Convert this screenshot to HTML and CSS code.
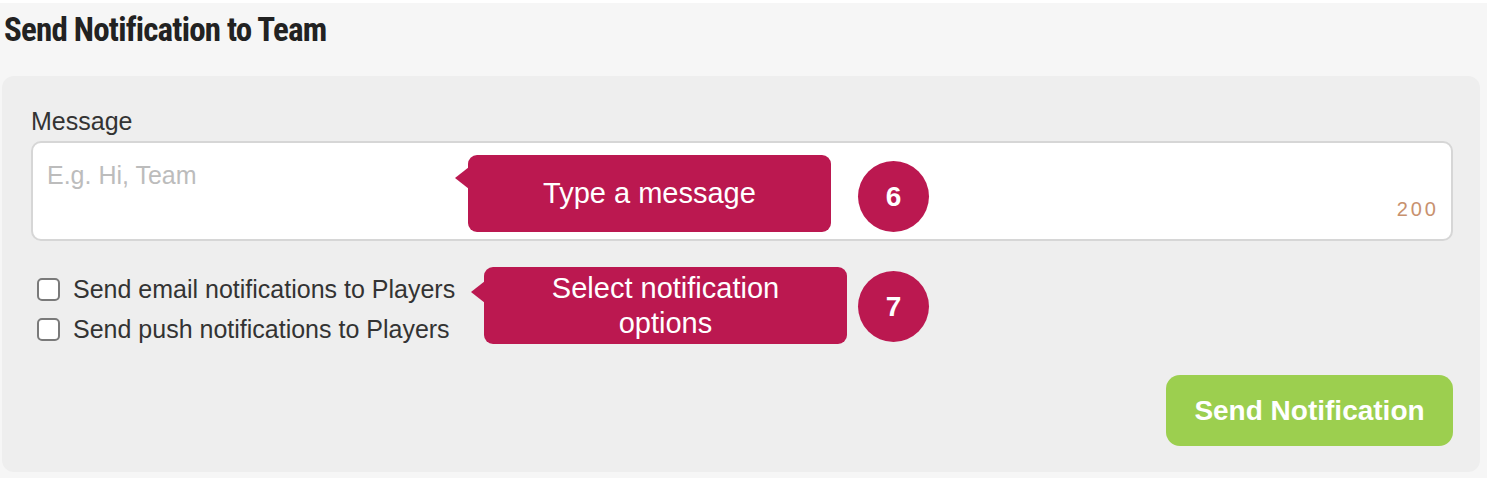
FILE: index.html
```html
<!DOCTYPE html>
<html lang="en">
<head>
  <meta charset="UTF-8">
  <title>Send Notification to Team</title>
  <link rel="stylesheet" href="styles.css">
</head>
<body>
  <div class="page">
    <h1 class="title">Send Notification to Team</h1>

    <div class="panel">
      <!-- Message -->
      <label class="field-label" for="message">Message</label>
      <div class="message-box">
        <textarea id="message" placeholder="E.g. Hi, Team"></textarea>
        <span class="counter">200</span>
      </div>

      <!-- Notification options -->
      <div class="options">
        <label class="option">
          <input type="checkbox">
          <span>Send email notifications to Players</span>
        </label>
        <label class="option">
          <input type="checkbox">
          <span>Send push notifications to Players</span>
        </label>
      </div>

      <div class="actions">
        <button type="button" class="send-btn">Send Notification</button>
      </div>

      <!-- Tutorial callouts -->
      <div class="callout callout-message">Type a message</div>
      <div class="step step-message">6</div>
      <div class="callout callout-options">Select notification<br>options</div>
      <div class="step step-options">7</div>
    </div>
  </div>
</body>
</html>
```

FILE: styles.css
```css
body {
  margin: 0;
  background-color: #fff;
  font-family: 'Liberation Sans', Arial, sans-serif;
  color: #333;
}

.page {
  margin-top: 3px;
  margin-right: 1px;
  padding: 7px 7px 6px 2px;
  background-color: #f6f6f6;
}

.title {
  margin: 0 0 26px 2px;
  font-family: 'Liberation Sans Narrow', 'Roboto Condensed', 'DejaVu Sans Condensed', sans-serif;
  font-size: 33px;
  line-height: 40px;
  letter-spacing: -0.8px;
  font-weight: bold;
  color: #222;
}

.panel {
  position: relative;
  display: flex;
  flex-direction: column;
  padding: 30px 27px 26px 29px;
  background-color: #eeeeee;
  border-radius: 12px;
}

.field-label {
  font-size: 25px;
  line-height: 30px;
  margin-bottom: 5px;
}

.message-box {
  position: relative;
}

.message-box textarea {
  display: block;
  width: 100%;
  height: 100px;
  box-sizing: border-box;
  padding: 19px 14px;
  border: 2px solid #d6d6d6;
  border-radius: 10px;
  background-color: #fff;
  font-family: inherit;
  font-size: 25px;
  line-height: 26px;
  color: #333;
  resize: none;
  outline: none;
}

.message-box textarea::placeholder {
  color: #bcbcbc;
}

.counter {
  position: absolute;
  right: 14px;
  bottom: 20px;
  font-size: 20px;
  letter-spacing: 3px;
  color: #c8916e;
}

.options {
  display: flex;
  flex-direction: column;
  margin-top: 28px;
}

.option {
  display: flex;
  align-items: center;
  gap: 13px;
  height: 40px;
  padding-left: 6px;
  font-size: 25px;
}

.option input {
  appearance: none;
  width: 23px;
  height: 23px;
  margin: 0;
  border: 2px solid #7a7a7a;
  border-radius: 5px;
  background-color: #fff;
}

.actions {
  display: flex;
  justify-content: flex-end;
  margin-top: 26px;
}

.send-btn {
  width: 287px;
  height: 71px;
  border: none;
  border-radius: 14px;
  background-color: #9ccf4f;
  color: #fff;
  font-family: inherit;
  font-size: 28px;
  font-weight: bold;
  cursor: pointer;
}

.callout {
  position: absolute;
  display: flex;
  align-items: center;
  justify-content: center;
  width: 363px;
  height: 77px;
  box-sizing: border-box;
  border-radius: 9px;
  background-color: #bb1850;
  color: #fff;
  font-size: 29px;
  line-height: 35px;
  text-align: center;
}

.callout::before {
  content: "";
  position: absolute;
  left: -13px;
  border-top: 11px solid transparent;
  border-bottom: 11px solid transparent;
  border-right: 14px solid #bb1850;
}

.callout-message {
  left: 466px;
  top: 79px;
}

.callout-message::before {
  top: 12px;
}

.callout-options {
  left: 482px;
  top: 191px;
}

.callout-options::before {
  top: 14px;
}

.step {
  position: absolute;
  display: flex;
  align-items: center;
  justify-content: center;
  width: 71px;
  height: 71px;
  border-radius: 50%;
  background-color: #bb1850;
  color: #fff;
  font-size: 28px;
  font-weight: bold;
}

.step-message {
  left: 856px;
  top: 85px;
}

.step-options {
  left: 856px;
  top: 195px;
}
```
